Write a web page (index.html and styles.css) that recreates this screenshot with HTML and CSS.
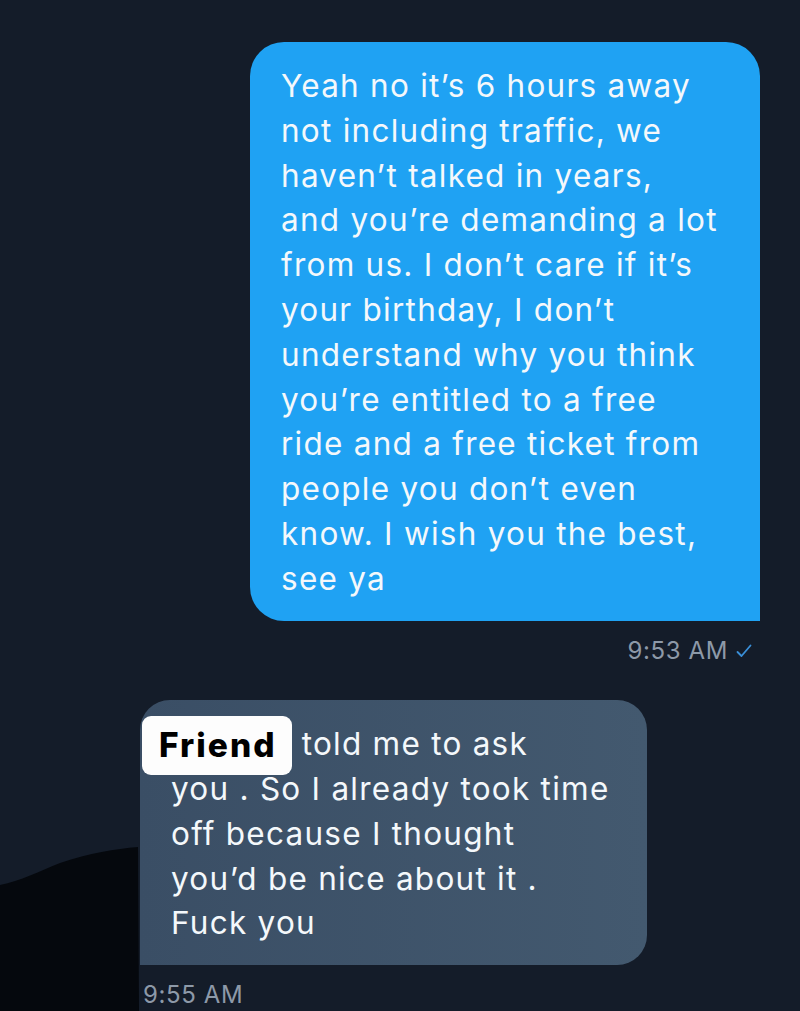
FILE: index.html
```html
<!DOCTYPE html>
<html>
<head>
<meta charset="utf-8">
<link rel="stylesheet" href="styles.css">
</head>
<body>
<div class="chat">
  <div class="msg out">
    <div class="bubble blue">Yeah no it’s 6 hours away<br>not including traffic, we<br>haven’t talked in years,<br>and you’re demanding a lot<br>from us. I don’t care if it’s<br>your birthday, I don’t<br>understand why you think<br>you’re entitled to a free<br>ride and a free ticket from<br>people you don’t even<br>know. I wish you the best,<br>see ya</div>
    <div class="meta right">9:53 AM <svg class="check" width="16" height="14" viewBox="0 0 16 14"><path d="M1.5 8 L5.5 12 L14.5 1.5" fill="none" stroke="#3a8fd8" stroke-width="1.8" stroke-linecap="round" stroke-linejoin="round"/></svg></div>
  </div>
  <div class="msg in">
    <div class="bubble gray"><span class="label">Friend</span> told me to ask<br>you . So I already took time<br>off because I thought<br>you’d be nice about it .<br>Fuck you</div>
    <div class="meta left">9:55 AM</div>
  </div>
</div>
<svg class="finger" width="142" height="170" viewBox="0 0 142 170"><path d="M0 44 C20 40 40 30 60 22 C90 12 115 8 138 6 L139 170 L0 170 Z" fill="#05080d"/></svg>
</body>
</html>
```
FILE: styles.css
```css
html, body {
  margin: 0;
  padding: 0;
  background: #141c29;
  height: 100%;
  overflow: hidden;
}
body {
  font-family: "Inter", "Liberation Sans", sans-serif;
  position: relative;
}
.chat {
  display: flex;
  flex-direction: column;
  padding-top: 42px;
}
.msg {
  display: flex;
  flex-direction: column;
}
.msg.out {
  align-items: flex-end;
  padding-right: 40px;
}
.msg.in {
  align-items: flex-start;
  padding-left: 140px;
  margin-top: 35px;
}
.bubble {
  color: #f4f8fb;
  font-size: 31.5px;
  line-height: 44.8px;
  letter-spacing: 1.25px;
  box-sizing: border-box;
  white-space: nowrap;
}
.blue {
  background: #1fa2f3;
  width: 510px;
  padding: 22px 20px 19px 31px;
  border-radius: 34px 34px 0 34px;
}
.gray {
  background: linear-gradient(90deg, #3a4e65, #43596f);
  width: 507px;
  padding: 22px 20px 19px 31px;
  border-radius: 30px 30px 30px 0;
  position: relative;
}
.label {
  display: inline-block;
  background: #fdfdfd;
  color: #000;
  font-weight: 800;
  font-size: 33.5px;
  letter-spacing: 2px;
  border-radius: 9px;
  margin-left: -29px;
  padding: 7px 15px 8px 17px;
  line-height: 44px;
  vertical-align: middle;
  margin-top: -9px;
  margin-bottom: -8px;
}
.meta {
  color: #8d99a8;
  font-size: 24px;
  letter-spacing: 0.6px;
  line-height: 28px;
  display: flex;
  align-items: center;
  gap: 8px;
}
.meta.right {
  margin-top: 16px;
  padding-right: 8px;
}
.meta.left {
  margin-top: 16px;
  padding-left: 3px;
}
.finger {
  position: absolute;
  left: 0;
  top: 841px;
}
```
